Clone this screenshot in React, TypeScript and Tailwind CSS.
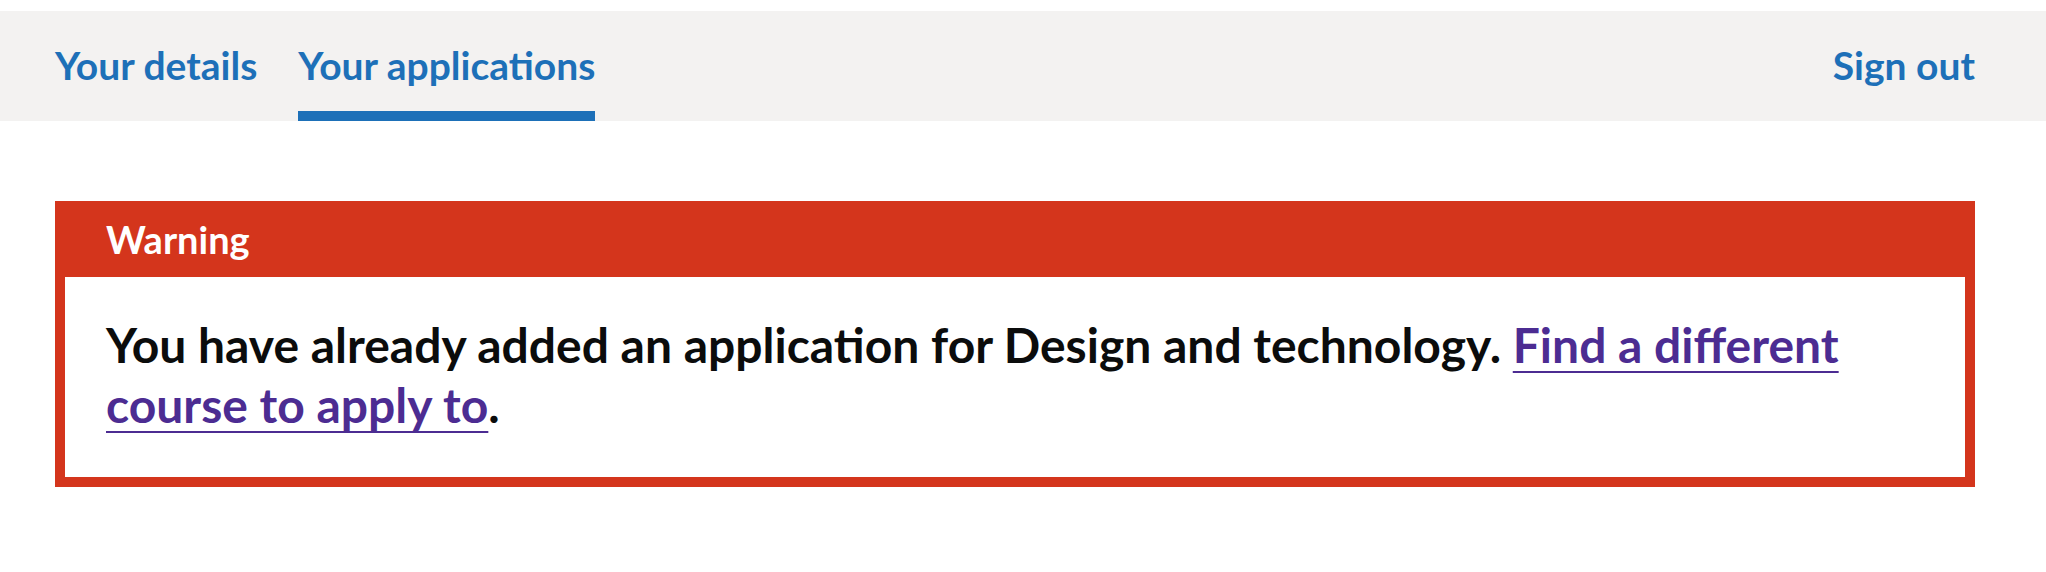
import React from "react";

export default function App() {
  const font = { fontFamily: "Lato, 'Noto Sans', 'Liberation Sans', sans-serif" };
  return (
    <div className="min-h-[572px] bg-white text-[#0b0c0c]" style={font}>
      <div className="pt-[11px]">
        <nav className="bg-[#f3f2f1] h-[110px]">
          <div className="ml-[55px] w-[1920px] h-full flex items-stretch">
            <div className="flex flex-col mr-[41px]">
              <a href="#" className="pt-[29px] text-[39px] leading-[50px] font-bold text-[#1d70b8] no-underline">
                Your details
              </a>
            </div>
            <div className="flex flex-col">
              <a href="#" className="pt-[29px] text-[39px] leading-[50px] font-bold text-[#1d70b8] no-underline">
                Your applications
              </a>
              <div className="mt-auto h-[10px] bg-[#1d70b8]" />
            </div>
            <div className="ml-auto flex flex-col">
              <a href="#" className="pt-[29px] text-[39px] leading-[50px] font-bold text-[#1d70b8] no-underline">
                Sign out
              </a>
            </div>
          </div>
        </nav>
      </div>

      <main className="ml-[55px] w-[1920px] pt-[80px]">
        <div className="bg-[#d4351c] border-[10px] border-[#d4351c] border-t-0">
          <div className="h-[76px] pl-[41px] flex items-center">
            <h2 className="text-[38px] leading-[50px] font-bold text-white">Warning</h2>
          </div>
          <div className="bg-white pl-[41px] pr-[41px] pt-[38px] pb-[42px]">
            <p className="text-[48px] leading-[60px] font-bold">
              You have already added an application for Design and technology.{" "}
              <a
                href="#"
                className="text-[#4c2c92] underline decoration-[2px] underline-offset-[8px]"
              >
                Find a different
                <br />
                course to apply to
              </a>
              .
            </p>
          </div>
        </div>
      </main>
    </div>
  );
}
